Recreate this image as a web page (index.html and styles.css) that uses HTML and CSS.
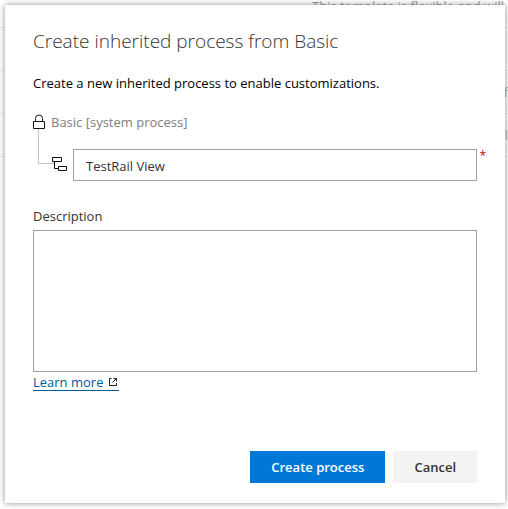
FILE: index.html
```html
<!DOCTYPE html>
<html lang="en">
<head>
<meta charset="utf-8">
<title>Create inherited process</title>
<link rel="stylesheet" href="styles.css">
</head>
<body>
<ul class="backdrop" aria-hidden="true">
  <li>This template is flexible and will</li>
  <li></li>
  <li class="edge">f</li>
  <li class="edge">l</li>
</ul>
<form class="dialog" role="dialog" aria-labelledby="title">
  <h1 id="title">Create inherited process from Basic</h1>
  <p class="intro">Create a new inherited process to enable customizations.</p>
  <div class="parent">
    <svg class="lock" width="12" height="16" viewBox="0 0 12 16" fill="none" stroke="#111" aria-hidden="true"><path d="M.5 7.5h11v7H.5zM2.500 7.500V4.500a3.500 3.500 0 0 1 7 0v3"/></svg>
    <span>Basic [system process]</span>
  </div>
  <div class="child">
    <svg class="branch" width="34" height="40" viewBox="0 0 34 40" fill="none" stroke="#111" aria-hidden="true"><path stroke="#c4c4c4" d="M5.500 -3v34.500H21"/><path d="M19.500 25.500h9v4h-9zM25.500 34.500h8v4h-8zM21.500 30v6.500h4"/></svg>
    <input class="field" type="text" value="TestRail View" aria-label="Process name" required>
    <span class="required">*</span>
  </div>
  <label class="caption" for="description">Description</label>
  <textarea class="field" id="description"></textarea>
  <a class="more" href="#">Learn more <svg width="12" height="10" viewBox="0 0 12 10" fill="none" stroke="#222" aria-hidden="true"><path d="M4.500 1.500h-2v7h7v-2.500M6.500 1.500h3v3M9.500 1.500l-4 4"/></svg></a>
  <div class="actions">
    <button class="primary" type="submit">Create process</button>
    <button type="button">Cancel</button>
  </div>
</form>
</body>
</html>
```
FILE: styles.css
```css
* { box-sizing: border-box; }

body {
  margin: 0;
  padding: 5px 3px 6px 5px;
  overflow: hidden;
  background: #fff;
  color: #333;
  font: 13px/20px "Open Sans", "Noto Sans", sans-serif;
}

.backdrop {
  position: absolute;
  inset: -15px 0 0;
  margin: 0;
  padding: 0;
  list-style: none;
  color: #a89c94;
  white-space: nowrap;
}

.backdrop li {
  height: 43px;
  padding-left: 312px;
  border-bottom: 1px solid #eee;
  line-height: 42px;
}

.backdrop .edge { text-align: right; color: #c9ad98; }

.dialog {
  position: relative;
  display: flex;
  flex-direction: column;
  padding: 20px 28px;
  background: #fff;
  box-shadow: 0 0 6px rgba(0, 0, 0, .45);
}

h1 {
  margin: 0;
  color: #333;
  font-size: 19px;
  font-weight: 300;
  line-height: 32px;
}

.intro {
  margin: 16px 0 19px;
  color: #000;
}

.parent {
  display: flex;
  align-items: center;
  gap: 6px;
  color: #808080;
}

.lock { flex: none; }

.child {
  position: relative;
  display: flex;
  align-items: flex-end;
  gap: 6px;
  height: 49px;
}

.branch {
  flex: none;
  align-self: flex-start;
  overflow: visible;
}

.field {
  width: 100%;
  border: 1px solid #a0a0a0;
  border-radius: 0;
  outline: 0;
  background: #fff;
  color: #333;
  font: inherit;
}

input.field {
  height: 32px;
  padding: 2px 12px 0;
}

.required {
  position: absolute;
  top: 14px;
  right: -9px;
  color: #c00;
  font-size: 12px;
}

.caption { margin: 25px 0 4px; }

textarea.field {
  display: block;
  height: 142px;
  resize: none;
}

.more {
  align-self: flex-start;
  margin-top: 2px;
  border-bottom: 1px solid #005a9e;
  color: #005a9e;
  line-height: 16px;
  text-decoration: none;
}

.actions {
  display: flex;
  justify-content: flex-end;
  gap: 8px;
  margin-top: 60px;
}

button {
  height: 32px;
  padding: 0 21px;
  border: 0;
  background: #f3f3f3;
  color: #333;
  font: 600 13px/20px "Open Sans", "Noto Sans", sans-serif;
}

.primary {
  background: #0078d7;
  color: #fff;
}
```
